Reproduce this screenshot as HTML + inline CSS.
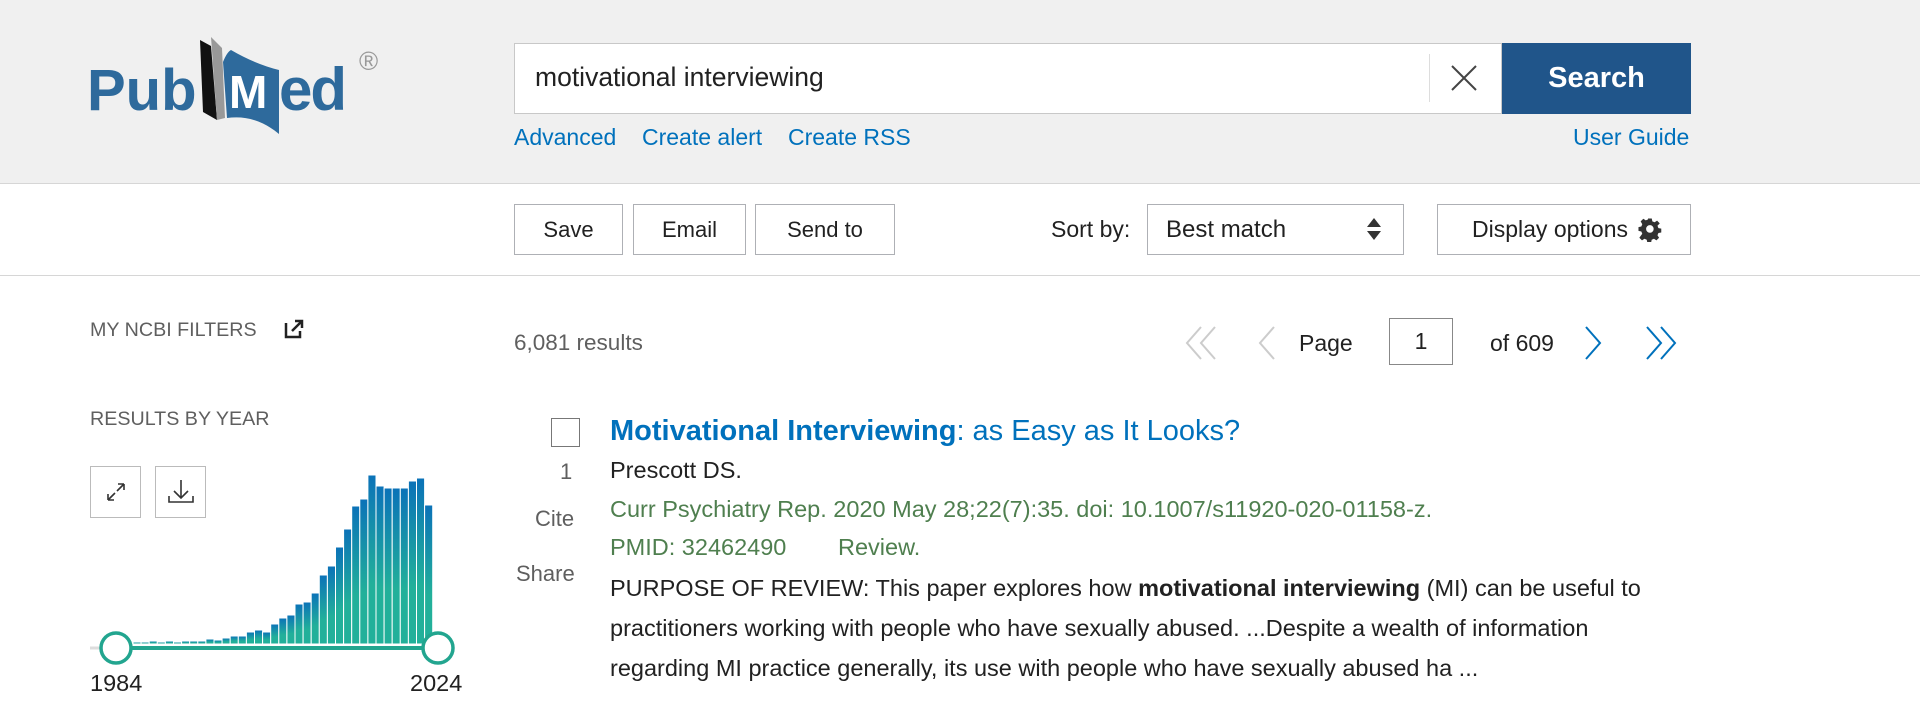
<!DOCTYPE html>
<html><head><meta charset="utf-8"><style>
*{margin:0;padding:0;box-sizing:border-box}
body{width:1920px;height:714px;overflow:hidden;background:#fff;font-family:"Liberation Sans",Arial,sans-serif;color:#212121;position:relative}
.a{position:absolute;white-space:nowrap}
.hdr{position:absolute;left:0;top:0;width:1920px;height:184px;background:#f0f0f0;border-bottom:1px solid #d6d6d6}
.btn{position:absolute;border:1px solid #aeb0b5;background:#fff;font-size:22px;display:flex;align-items:center;justify-content:center;color:#212121}
.lnk{color:#0071bc;font-size:23px}
.g{color:#4f7f4f;font-size:23.5px}
.gr{color:#5f5f5f}
.t{font-size:23.5px}
</style></head><body>
<div class="hdr"></div>
<!-- logo -->
<svg class="a" style="left:85px;top:30px" width="310" height="115" viewBox="0 0 310 115">
<text x="2" y="80" font-family="Liberation Sans,Arial,sans-serif" font-weight="bold" font-size="58" fill="#2e6a9c">Pub</text>
<path d="M115 10 L126 16 L132 90 L118 82 Z" fill="#111"/>
<path d="M126 7 L137 18 L140 88 L132 90 Z" fill="#999"/>
<path d="M138 32 Q142 22 146 20 Q170 34 194 40 L194 104 Q170 84 142 88 Z" fill="#2e6a9c"/>
<text x="144" y="78" font-family="Liberation Sans,Arial,sans-serif" font-weight="bold" font-size="46" fill="#fff" textLength="44">M</text>
<text x="194" y="80" font-family="Liberation Sans,Arial,sans-serif" font-weight="bold" font-size="60" fill="#2e6a9c" textLength="68">ed</text>
<text x="274" y="40" font-family="Liberation Sans,Arial,sans-serif" font-size="26" fill="#999">®</text>
</svg>
<!-- search -->
<div class="a" style="left:514px;top:43px;width:988px;height:71px;background:#fff;border:1px solid #c8c8c8"></div>
<div class="a" style="left:535px;top:62px;font-size:26.5px;color:#212121">motivational interviewing</div>
<div class="a" style="left:1429px;top:54px;width:1px;height:48px;background:#ddd"></div>
<svg class="a" style="left:1450px;top:64px" width="28" height="28"><path d="M2 2L26 26M26 2L2 26" stroke="#444" stroke-width="2"/></svg>
<div class="a" style="left:1502px;top:43px;width:189px;height:71px;background:#20558a;color:#fff;font-weight:bold;font-size:29px;display:flex;align-items:center;justify-content:center">Search</div>
<div class="a lnk" style="left:514px;top:124px">Advanced</div>
<div class="a lnk" style="left:642px;top:124px">Create alert</div>
<div class="a lnk" style="left:788px;top:124px">Create RSS</div>
<div class="a lnk" style="left:1573px;top:124px">User Guide</div>
<!-- toolbar -->
<div class="a" style="left:0;top:275px;width:1920px;height:1px;background:#d6d6d6"></div>
<div class="btn" style="left:514px;top:204px;width:109px;height:51px">Save</div>
<div class="btn" style="left:633px;top:204px;width:113px;height:51px">Email</div>
<div class="btn" style="left:755px;top:204px;width:140px;height:51px">Send to</div>
<div class="a" style="left:1051px;top:216px;font-size:23px">Sort by:</div>
<div class="btn" style="left:1147px;top:204px;width:257px;height:51px;justify-content:flex-start;padding-left:18px;font-size:24px">Best match</div>
<svg class="a" style="left:1366px;top:217px" width="16" height="24"><path d="M8 1L15 10H1Z M8 23L15 14H1Z" fill="#333"/></svg>
<div class="btn" style="left:1437px;top:204px;width:254px;height:51px;padding-right:28px;font-size:23px">Display options</div>
<svg class="a" style="left:1638px;top:218px" width="24" height="24" viewBox="0 0 24 24"><path fill="#333" d="M10 1h4l.6 3 2.4 1 2.6-1.7 2.8 2.8L20 8.7l1 2.4 3 .6v4l-3 .6-1 2.4 1.7 2.6-2.8 2.8-2.6-1.7-2.4 1-.6 3h-4l-.6-3-2.4-1-2.6 1.7-2.8-2.8L4 17.1 3 14.7l-3-.6v-4l3-.6 1-2.4L2.3 4.1 5.1 1.3 7.7 3l2.4-1zM12 8a4 4 0 100 8 4 4 0 000-8z" transform="scale(.95) translate(.5 -.5)"/></svg>
<!-- left -->
<div class="a gr" style="left:90px;top:319px;font-size:19.7px">MY NCBI FILTERS</div>
<svg class="a" style="left:284px;top:319px" width="20" height="20"><path d="M2 4v14h14v-6M8 12L17 3M11 2h7v7" stroke="#222" stroke-width="2.5" fill="none"/></svg>
<div class="a gr" style="left:90px;top:408px;font-size:19.7px">RESULTS BY YEAR</div>
<div class="a" style="left:90px;top:466px;width:51px;height:52px;border:1px solid #bbb"></div>
<svg class="a" style="left:104px;top:480px" width="24" height="24"><path d="M4 20L11 13M4 20v-6M4 20h6M20 4l-7 7M20 4v6M20 4h-6" stroke="#333" stroke-width="1.6" fill="none"/></svg>
<div class="a" style="left:155px;top:466px;width:51px;height:52px;border:1px solid #bbb"></div>
<svg class="a" style="left:167px;top:478px" width="28" height="28"><path d="M14 2v18M7 13l7 7 7-7M2 18v6h24v-6" stroke="#333" stroke-width="1.6" fill="none"/></svg>
<svg class="a" style="left:90px;top:460px" width="370" height="220">
<defs><linearGradient id="gg" x1="0" y1="0" x2="0" y2="1"><stop offset="0" stop-color="#0b72b8"/><stop offset=".65" stop-color="#22b09a"/><stop offset="1" stop-color="#22b09a"/></linearGradient></defs>
<g fill="url(#gg)" stroke="#fff" stroke-width="1">
<rect x="43" y="182" width="8.1" height="2"/><rect x="51.1" y="182" width="8.1" height="2"/><rect x="59.2" y="181" width="8.1" height="3"/><rect x="67.3" y="182" width="8.1" height="2"/><rect x="75.4" y="181" width="8.1" height="3"/><rect x="83.5" y="182" width="8.1" height="2"/><rect x="91.6" y="181" width="8.1" height="3"/><rect x="99.7" y="181" width="8.1" height="3"/><rect x="107.8" y="181" width="8.1" height="3"/><rect x="115.9" y="179" width="8.1" height="5"/><rect x="124" y="180" width="8.1" height="4"/><rect x="132.1" y="178" width="8.1" height="6"/><rect x="140.2" y="176" width="8.1" height="8"/><rect x="148.3" y="176" width="8.1" height="8"/><rect x="156.4" y="172" width="8.1" height="12"/><rect x="164.5" y="170" width="8.1" height="14"/><rect x="172.6" y="172" width="8.1" height="12"/><rect x="180.7" y="164" width="8.1" height="20"/><rect x="188.8" y="158" width="8.1" height="26"/><rect x="196.9" y="155" width="8.1" height="29"/><rect x="205" y="144" width="8.1" height="40"/><rect x="213.1" y="142" width="8.1" height="42"/><rect x="221.2" y="133" width="8.1" height="51"/><rect x="229.3" y="115" width="8.1" height="69"/><rect x="237.4" y="106" width="8.1" height="78"/><rect x="245.5" y="87" width="8.1" height="97"/><rect x="253.6" y="69" width="8.1" height="115"/><rect x="261.7" y="46" width="8.1" height="138"/><rect x="269.8" y="39" width="8.1" height="145"/><rect x="277.9" y="15" width="8.1" height="169"/><rect x="286" y="26" width="8.1" height="158"/><rect x="294.1" y="28" width="8.1" height="156"/><rect x="302.2" y="28" width="8.1" height="156"/><rect x="310.3" y="28" width="8.1" height="156"/><rect x="318.4" y="21" width="8.1" height="163"/><rect x="326.5" y="18" width="8.1" height="166"/><rect x="334.6" y="45" width="8.1" height="139"/>
</g>
<line x1="0" y1="188" x2="360" y2="188" stroke="#ddd" stroke-width="3"/>
<line x1="26" y1="188" x2="348" y2="188" stroke="#22a58f" stroke-width="4"/>
<circle cx="26" cy="188" r="15" fill="#fff" stroke="#22a58f" stroke-width="3.5"/>
<circle cx="348" cy="188" r="15" fill="#fff" stroke="#22a58f" stroke-width="3.5"/>
</svg>
<div class="a" style="left:90px;top:670px;font-size:23.5px;color:#212121">1984</div>
<div class="a" style="left:410px;top:670px;font-size:23.5px;color:#212121">2024</div>
<!-- results -->
<div class="a gr" style="left:514px;top:330px;font-size:22.5px">6,081 results</div>
<svg class="a" style="left:1185px;top:325px" width="34" height="36"><path d="M16 2L2 18l14 16M30 2L16 18l14 16" stroke="#ccc" stroke-width="2" fill="none"/></svg>
<svg class="a" style="left:1257px;top:325px" width="20" height="36"><path d="M17 2L3 18l14 16" stroke="#ccc" stroke-width="2" fill="none"/></svg>
<div class="a" style="left:1299px;top:330px;font-size:23px">Page</div>
<div class="a" style="left:1389px;top:318px;width:64px;height:47px;border:1px solid #888;font-size:23px;display:flex;align-items:center;justify-content:center">1</div>
<div class="a" style="left:1490px;top:330px;font-size:23px">of 609</div>
<svg class="a" style="left:1583px;top:325px" width="20" height="36"><path d="M3 2l14 16L3 34" stroke="#0071bc" stroke-width="2" fill="none"/></svg>
<svg class="a" style="left:1644px;top:325px" width="34" height="36"><path d="M3 2l14 16L3 34M17 2l14 16-14 16" stroke="#0071bc" stroke-width="2" fill="none"/></svg>
<div class="a" style="left:551px;top:418px;width:29px;height:29px;border:1.5px solid #777"></div>
<div class="a gr" style="left:560px;top:459px;font-size:22px">1</div>
<div class="a gr" style="left:535px;top:506px;font-size:22px">Cite</div>
<div class="a gr" style="left:516px;top:561px;font-size:22px">Share</div>
<div class="a" style="left:610px;top:415px;font-size:29px;color:#0071bc"><b>Motivational Interviewing</b>: as Easy as It Looks?</div>
<div class="a t" style="left:610px;top:457px">Prescott DS.</div>
<div class="a g" style="left:610px;top:496px">Curr Psychiatry Rep. 2020 May 28;22(7):35. doi: 10.1007/s11920-020-01158-z.</div>
<div class="a g" style="left:610px;top:534px">PMID: 32462490</div>
<div class="a g" style="left:838px;top:534px">Review.</div>
<div class="a t" style="left:610px;top:575px">PURPOSE OF REVIEW: This paper explores how <b>motivational interviewing</b> (MI) can be useful to</div>
<div class="a t" style="left:610px;top:615px">practitioners working with people who have sexually abused. ...Despite a wealth of information</div>
<div class="a t" style="left:610px;top:655px">regarding MI practice generally, its use with people who have sexually abused ha ...</div>
</body></html>
